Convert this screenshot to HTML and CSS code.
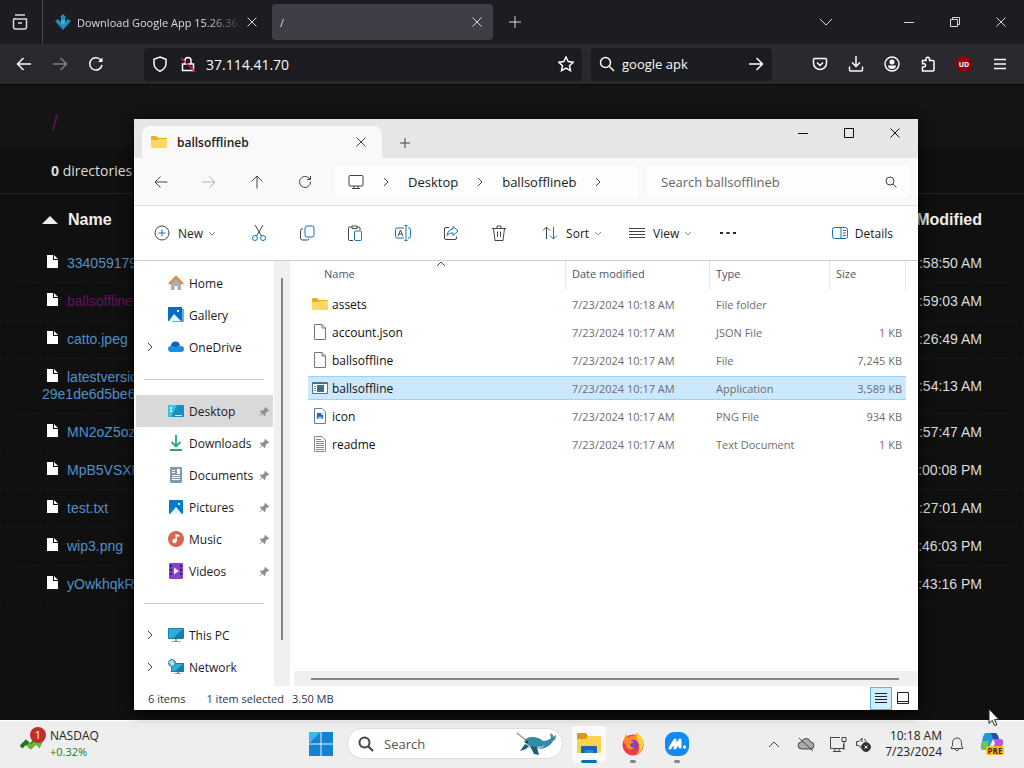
FILE: index.html
```html
<!DOCTYPE html>
<html lang="en">
<head>
  <meta charset="UTF-8">
  <title>Desktop</title>
  <meta name="viewport" content="width=device-width, initial-scale=1">
  <link rel="stylesheet" href="styles.css">
</head>
<body>
  <!-- shared icons -->
  <svg class="sprite" aria-hidden="true">
    <symbol id="doc" viewBox="0 0 11 13"><path fill="#fff" d="M0 0h6v5h5v8H0zM7 0l4 4H7z"/></symbol>
    <symbol id="close" viewBox="0 0 12 12"><path d="M1.500 1.500l9 9M10.500 1.500l-9 9"/></symbol>
    <symbol id="right" viewBox="0 0 12 12"><path d="M4 2l4 4-4 4"/></symbol>
    <symbol id="down" viewBox="0 0 12 12"><path d="M3 5l3 3 3-3"/></symbol>
    <symbol id="glass" viewBox="0 0 16 16"><circle cx="6.500" cy="6.500" r="5"/><path d="M10.200 10.200L15 15"/></symbol>
    <symbol id="arrow" viewBox="0 0 16 16"><path d="M15 8H1.500M7.500 2l-6 6 6 6"/></symbol>
    <symbol id="pin" viewBox="0 0 12 12"><path fill="#8a8f95" stroke="none" d="M7 1l4 4-1 1-1-.2L7.200 7.600 7 10 5.900 11 3.600 8.500.8 11.300l-.5-.5L3 8 .9 6 2 5l2.400-.2L6.200 3 6 2z"/></symbol>
    <symbol id="folder" viewBox="0 0 16 16"><path fill="#e8b021" d="M0 3q0-1 1-1h4l2 2h8q1 0 1 1v3H0z"/><path fill="#ffd766" d="M0 6h6l2-1h8v8q0 1-1 1H1q-1 0-1-1z"/></symbol>
    <symbol id="page" viewBox="0 0 12 16"><path fill="#fdfdfd" stroke="#777" d="M.5.500h7.500L11.500 4v11.500H.5z"/><path fill="none" stroke="#777" d="M8 .5V4h3.500"/></symbol>
  </svg>

  <div class="desktop">
    <div class="browser">
      <div class="tabs">
        <button class="tab-view" aria-label="Firefox View">
          <svg width="18" height="18" viewBox="0 0 18 18"><path d="M4 2h10M2.500 6h13v8q0 2-2 2h-9q-2 0-2-2V7q0-1.500 2-1.500M7 10h4"/></svg>
        </button>
        <div class="tab">
          <svg width="16" height="16" viewBox="0 0 16 16"><path fill="#1d8cb8" stroke="none" d="M8 0l3 3-3 3-3-3zM0 7l3-2 5 5 5-5 3 2-8 9z"/><path fill="#37b4d8" stroke="none" d="M6 4l2 2 2-2v5l-2 2-2-2z"/></svg>
          <span class="tab-title">Download Google App 15.26.36</span>
          <button aria-label="Close tab"><svg width="12" height="12"><use href="#close"/></svg></button>
        </div>
        <div class="tab active">
          <span class="tab-title">/</span>
          <button aria-label="Close tab"><svg width="12" height="12"><use href="#close"/></svg></button>
        </div>
        <button class="new-tab" aria-label="New tab"><svg width="12" height="12" viewBox="0 0 12 12"><path d="M6 0v12M0 6h12"/></svg></button>
        <div class="tab-controls">
          <button aria-label="List all tabs"><svg width="14" height="14" viewBox="0 0 14 14"><path d="M1 4l6 6 6-6"/></svg></button>
          <button aria-label="Minimize"><svg width="12" height="12" viewBox="0 0 12 12"><path d="M1 6.500h10"/></svg></button>
          <button aria-label="Restore"><svg width="12" height="12" viewBox="0 0 12 12"><path d="M1.500 3.500h7v7h-7zM3.500 3V1.500h7v7H9"/></svg></button>
          <button aria-label="Close"><svg width="12" height="12"><use href="#close"/></svg></button>
        </div>
      </div>

      <div class="toolbar">
        <div class="nav-icons">
          <button aria-label="Back"><svg width="16" height="16"><use href="#arrow"/></svg></button>
          <button class="dim" aria-label="Forward"><svg class="flip" width="16" height="16"><use href="#arrow"/></svg></button>
          <button aria-label="Reload"><svg width="16" height="16" viewBox="0 0 16 16"><path d="M14 9a6.200 6.200 0 1 1-2-5.800L14 5"/><path fill="#fbfbfe" d="M14.500 1.500v4.500H10z" stroke="none"/></svg></button>
        </div>
        <div class="urlbar">
          <svg width="16" height="16" viewBox="0 0 16 16"><path d="M8 1l6 2.200v4C14 11 12 13.500 8 15.200 4 13.500 2 11 2 7.200v-4z"/></svg>
          <svg width="16" height="16" viewBox="0 0 16 16"><path d="M2.500 8h11v6.500h-11zM5 8V4.500a3 3 0 0 1 6 0V8"/><path class="slash" d="M1 2l14 13.500"/></svg>
          <input type="text" value="37.114.41.70" aria-label="Address">
          <svg width="16" height="16" viewBox="0 0 16 16"><path d="M8 1l2.200 4.600 5 .6-3.700 3.500 1 5L8 12.200l-4.500 2.500 1-5L.8 6.200l5-.6z"/></svg>
        </div>
        <div class="searchbar">
          <svg width="16" height="16"><use href="#glass"/></svg>
          <input type="text" value="google apk" aria-label="Search">
          <svg class="flip" width="16" height="16"><use href="#arrow"/></svg>
        </div>
        <div class="tools">
          <button aria-label="Pocket"><svg width="16" height="16" viewBox="0 0 16 16"><path d="M2.500 2.500h11q1 0 1 1V7a6.500 6.500 0 0 1-13 0V3.500q0-1 1-1zM5 6.500L8 9.500l3-3"/></svg></button>
          <button aria-label="Downloads"><svg width="16" height="16" viewBox="0 0 16 16"><path d="M8 0v10M4 6.500L8 10.500l4-4M1.500 10.500V14q0 1 1 1h11q1 0 1-1v-3.500"/></svg></button>
          <button aria-label="Account"><svg width="16" height="16" viewBox="0 0 16 16"><circle cx="8" cy="8" r="7"/><circle cx="8" cy="6" r="2.500" fill="#fbfbfe" stroke="none"/><path fill="#fbfbfe" stroke="none" d="M3.800 9.500h8.400Q11.500 13 8 13T3.800 9.500z"/></svg></button>
          <button aria-label="Extensions"><svg width="16" height="16" viewBox="0 0 16 16"><path d="M6 4.500V3a1.700 1.700 0 0 1 3.500 0v1.500H13q1 0 1 1V14q0 1-1 1H2.500v-4H4a1.600 1.600 0 0 0 0-3.300H2.500V4.500z"/></svg></button>
          <button class="ublock" aria-label="uBlock">UD</button>
          <button aria-label="Menu"><svg width="14" height="14" viewBox="0 0 14 14"><path d="M1 2.500h12M1 7h12M1 11.500h12"/></svg></button>
        </div>
      </div>

      <main class="listing">
        <header><h1><a href="#">/</a></h1></header>
        <div class="meta"><b>0</b> directories</div>
        <table>
          <thead>
            <tr><th><span class="sort-up"></span>Name</th><th>Modified</th></tr>
          </thead>
          <tbody>
            <tr><td><svg class="doc"><use href="#doc"/></svg><a href="#">334059179</a></td><td>:58:50 AM</td></tr>
            <tr><td><svg class="doc"><use href="#doc"/></svg><a class="visited" href="#">ballsoffline</a></td><td>:59:03 AM</td></tr>
            <tr><td><svg class="doc"><use href="#doc"/></svg><a href="#">catto.jpeg</a></td><td>:26:49 AM</td></tr>
            <tr><td><svg class="doc"><use href="#doc"/></svg><a href="#">latestversio<br>29e1de6d5be6</a></td><td>:54:13 AM</td></tr>
            <tr><td><svg class="doc"><use href="#doc"/></svg><a href="#">MN2oZ5oz</a></td><td>:57:47 AM</td></tr>
            <tr><td><svg class="doc"><use href="#doc"/></svg><a href="#">MpB5VSXH</a></td><td>:00:08 PM</td></tr>
            <tr><td><svg class="doc"><use href="#doc"/></svg><a href="#">test.txt</a></td><td>:27:01 AM</td></tr>
            <tr><td><svg class="doc"><use href="#doc"/></svg><a href="#">wip3.png</a></td><td>:46:03 PM</td></tr>
            <tr><td><svg class="doc"><use href="#doc"/></svg><a href="#">yOwkhqkR</a></td><td>:43:16 PM</td></tr>
          </tbody>
        </table>
      </main>
    </div>

    <!-- File Explorer window -->
    <section class="explorer">
      <div class="titlebar">
        <div class="ex-tab">
          <svg width="16" height="16"><use href="#folder"/></svg>
          <b>ballsofflineb</b>
          <button aria-label="Close tab"><svg width="12" height="12"><use href="#close"/></svg></button>
        </div>
        <button class="ex-new" aria-label="New tab"><svg width="10" height="10" viewBox="0 0 10 10"><path d="M5 0v10M0 5h10"/></svg></button>
        <div class="win-controls">
          <button aria-label="Minimize"><svg width="12" height="12" viewBox="0 0 12 12"><path d="M1 6.500h10"/></svg></button>
          <button aria-label="Maximize"><svg width="12" height="12" viewBox="0 0 12 12"><path d="M1.500 1.500h9v9h-9z"/></svg></button>
          <button aria-label="Close"><svg width="12" height="12"><use href="#close"/></svg></button>
        </div>
      </div>

      <div class="navbar">
        <div class="ex-nav">
          <button aria-label="Back"><svg width="14" height="14" viewBox="0 0 14 14"><path d="M13.500 7H1M6.500 1.500L1 7l5.500 5.500"/></svg></button>
          <button class="dim" aria-label="Forward"><svg width="14" height="14" viewBox="0 0 14 14"><path d="M.5 7H13M7.500 1.500L13 7l-5.500 5.500"/></svg></button>
          <button aria-label="Up"><svg width="14" height="14" viewBox="0 0 14 14"><path d="M7 13.500V1M1.500 6.500L7 1l5.500 5.500"/></svg></button>
          <button aria-label="Refresh"><svg width="14" height="14" viewBox="0 0 14 14"><path d="M12.500 7A5.500 5.500 0 1 1 11 3.200l1.500 1.300M12.500 1v3.500H9"/></svg></button>
        </div>
        <div class="crumbs">
          <svg width="16" height="16" viewBox="0 0 16 16"><rect x="1" y="1.500" width="14" height="10.500" rx="1"/><path d="M6 12v2.500M10 12v2.500M4 14.500h8"/></svg>
          <svg width="12" height="12"><use href="#right"/></svg>
          <a href="#">Desktop</a>
          <svg width="12" height="12"><use href="#right"/></svg>
          <a href="#">ballsofflineb</a>
          <svg width="12" height="12"><use href="#right"/></svg>
        </div>
        <div class="ex-search">
          <input type="text" placeholder="Search ballsofflineb" aria-label="Search ballsofflineb">
          <svg width="12" height="12" viewBox="0 0 12 12"><circle cx="5" cy="5" r="4"/><path d="M8 8l3.500 3.500"/></svg>
        </div>
      </div>

      <div class="commands">
        <button class="cmd new"><svg width="16" height="16" viewBox="0 0 16 16"><circle cx="8" cy="8" r="7"/><path class="blue" d="M8 4.500v7M4.500 8h7"/></svg>New<svg class="caret" width="12" height="12"><use href="#down"/></svg></button>
        <div class="cmd-icons">
          <button aria-label="Cut"><svg width="16" height="16" viewBox="0 0 16 16"><path d="M4 0l6.500 11M12 0L5.500 11"/><circle class="blue" cx="4" cy="13" r="2.500"/><circle class="blue" cx="12" cy="13" r="2.500"/></svg></button>
          <button aria-label="Copy"><svg width="16" height="16" viewBox="0 0 16 16"><rect class="blue" x="6" y="1" width="9" height="11" rx="2"/><path d="M4 4H3q-1.500 0-1.500 1.500v7.500q0 2 2 2h5q1.500 0 1.500-1.500"/></svg></button>
          <button aria-label="Paste"><svg width="16" height="16" viewBox="0 0 16 16"><path d="M6 15.500H2.500q-1 0-1-1V3q0-1 1-1H5M10 2h2q1 0 1 1v2M5 1h5v2.500H5z"/><rect class="blue" x="7.500" y="6" width="7" height="9.500" rx="1"/></svg></button>
          <button aria-label="Rename"><svg width="18" height="16" viewBox="0 0 18 16"><path class="blue" d="M10 3H3Q1.500 3 1.500 4.500v7Q1.500 13 3 13h7M14 3h1q1.500 0 1.500 1.500v7Q16.500 13 15 13h-1M12 1v14M10.500.5h3M10.500 15.500h3"/><path d="M4 11l2.500-6L9 11M5 9h3"/></svg></button>
          <button aria-label="Share"><svg width="16" height="16" viewBox="0 0 16 16"><path d="M6 2.500H3Q1.500 2.500 1.500 4v9q0 1.500 1.500 1.500h9q1.500 0 1.500-1.500v-1.500"/><path class="blue" d="M10 1.500l5 4.500-5 4.500V8q-4-.5-6 2.500Q5 4.500 10 4z"/></svg></button>
          <button aria-label="Delete"><svg width="16" height="16" viewBox="0 0 16 16"><path d="M1 3.500h14M6 3V1h4v2M2.500 3.500l1.500 12h8l1.500-12M6.500 6.500v5.500M9.500 6.500v5.500"/></svg></button>
        </div>
        <button class="cmd sort"><svg width="16" height="16" viewBox="0 0 16 16"><path d="M4.500 14V2M1 5.500L4.500 2 8 5.500"/><path class="blue" d="M11.500 2v12M8 10.500l3.500 3.500 3.500-3.500"/></svg>Sort<svg class="caret" width="12" height="12"><use href="#down"/></svg></button>
        <button class="cmd view"><svg width="16" height="16" viewBox="0 0 16 16"><path d="M0 3.500h16M0 6.500h16M0 9.500h16M0 12.500h16"/></svg>View<svg class="caret" width="12" height="12"><use href="#down"/></svg></button>
        <button class="cmd more" aria-label="See more"><svg width="16" height="4" viewBox="0 0 16 4"><path fill="#222" stroke="none" d="M0 1h3v2H0zM6.500 1h3v2h-3zM13 1h3v2h-3z"/></svg></button>
        <button class="cmd details"><svg width="16" height="16" viewBox="0 0 16 16"><rect class="blue" x=".5" y="2.500" width="15" height="11" rx="2"/><path class="blue" d="M9 2.500v11M11 5.500h3M11 8h3M11 10.500h3"/></svg>Details</button>
      </div>

      <div class="panes">
        <nav class="side">
          <a href="#"><svg class="ico" viewBox="0 0 16 16"><path fill="#a9adb5" d="M3 7l5-4 5 4v8H9.500v-4h-3v4H3z"/><path fill="none" stroke="#e08a3c" stroke-width="2.400" d="M1 9l7-7 7 7"/></svg>Home</a>
          <a href="#"><svg class="ico" viewBox="0 0 16 16"><path fill="#55b5ec" d="M3 2h13v13H4z"/><path fill="#0c6cc0" d="M0 0h14v14H0z"/><path fill="#e6f6ff" d="M1 14l5-7 7 7zM9 3h2v2H9z"/></svg>Gallery</a>
          <a href="#" class="expand"><svg class="chev" width="12" height="12"><use href="#right"/></svg><svg class="ico" viewBox="0 0 16 16"><path fill="#0f63bd" d="M3 8a4.500 4.500 0 0 1 9-2l-6 7z"/><path fill="#1d8ee5" d="M2 13q-2-1-2-3 0-3 3-3 2-.500 4 1l6-1q3 0 3 3t-3 3z"/></svg>OneDrive</a>
          <hr>
          <a href="#" class="current"><svg class="ico" viewBox="0 0 16 16"><rect y="2" width="16" height="12" rx="1" fill="#198dc4"/><path fill="#42c1df" d="M0 2h9L3 14H0z"/><path fill="#c9f2ff" d="M2 4h2v2H2zM2 7h2v2H2zM7 12h7v1H7z"/></svg>Desktop<svg class="pin"><use href="#pin"/></svg></a>
          <a href="#"><svg class="ico" viewBox="0 0 16 16"><path fill="none" stroke="#24a77e" stroke-width="1.800" d="M8 0v11M3.500 7L8 11.500 12.500 7M2 15h12"/></svg>Downloads<svg class="pin"><use href="#pin"/></svg></a>
          <a href="#"><svg class="ico" viewBox="0 0 16 16"><rect x="2" width="12" height="16" rx="1" fill="#8499ad"/><path fill="#fff" d="M4 3h3v1H4zM4 5h3v1H4zM9 2h3v5H9zM4 8h8v1H4zM4 10h8v1H4zM4 12h8v1H4z"/></svg>Documents<svg class="pin"><use href="#pin"/></svg></a>
          <a href="#"><svg class="ico" viewBox="0 0 16 16"><rect x="1" y="1" width="14" height="14" rx="1" fill="#0878cc"/><path fill="#e6f6ff" d="M2 15l6-7 6 7zM10 4h2v2h-2z"/></svg>Pictures<svg class="pin"><use href="#pin"/></svg></a>
          <a href="#"><svg class="ico" viewBox="0 0 16 16"><circle cx="8" cy="8" r="8" fill="#d96450"/><circle cx="6.500" cy="10" r="2.200" fill="#fff"/><path fill="#fff" d="M7.500 3l4 1v2l-2.700-.7V10H7.500z"/></svg>Music<svg class="pin"><use href="#pin"/></svg></a>
          <a href="#"><svg class="ico" viewBox="0 0 16 16"><rect x="1" width="14" height="16" rx="1" fill="#8342c8"/><path fill="#3f1584" d="M2 2h2v2H2zM2 6h2v2H2zM2 10h2v2H2zM12 2h2v2h-2zM12 6h2v2h-2zM12 10h2v2h-2z"/><path fill="#f4e8ff" d="M6 4.500l5 3.500-5 3.500z"/></svg>Videos<svg class="pin"><use href="#pin"/></svg></a>
          <hr>
          <a href="#" class="expand"><svg class="chev" width="12" height="12"><use href="#right"/></svg><svg class="ico" viewBox="0 0 16 16"><rect y="1" width="16" height="11" rx="1" fill="#167fae"/><path fill="#2cb0d8" d="M1 2h14L5 11H1z"/><path fill="#8a9aa5" d="M7 12h2v2h3v1H4v-1h3z"/></svg>This PC</a>
          <a href="#" class="expand"><svg class="chev" width="12" height="12"><use href="#right"/></svg><svg class="ico" viewBox="0 0 16 16"><rect x="3" y="4" width="13" height="9" fill="#167fae"/><path fill="#2cb0d8" d="M4 5h11l-8 7H4z"/><path fill="#8a9aa5" d="M9 13h2v1h2v1H7v-1h2z"/><circle cx="4" cy="4" r="3.500" fill="#6abbd6" stroke="#4a7890"/><path fill="none" stroke="#e4fbff" d="M1 3l5 2M4 1v6"/></svg>Network</a>
        </nav>
        <div class="side-scroll"><i></i></div>

        <div class="files">
          <svg class="sort-mark" width="10" height="6" viewBox="0 0 10 6"><path d="M1 5l4-4 4 4"/></svg>
          <table>
            <thead>
              <tr><th>Name</th><th>Date modified</th><th>Type</th><th>Size</th></tr>
            </thead>
            <tbody>
              <tr><td><svg class="ico"><use href="#folder"/></svg>assets</td><td>7/23/2024 10:18 AM</td><td>File folder</td><td></td></tr>
              <tr><td><svg class="ico"><use href="#page"/></svg>account.json</td><td>7/23/2024 10:17 AM</td><td>JSON File</td><td>1 KB</td></tr>
              <tr><td><svg class="ico"><use href="#page"/></svg>ballsoffline</td><td>7/23/2024 10:17 AM</td><td>File</td><td>7,245 KB</td></tr>
              <tr class="selected"><td><svg class="ico" viewBox="0 0 16 16"><path fill="#fff" stroke="#527488" d="M.5 2.500h15v11H.5z"/><path fill="#356f91" d="M1 3h14v1H1zM5 5h7v7H5z"/><path fill="#6a8aa0" d="M2 6h2v1H2zM2 8h2v1H2zM2 10h2v1H2z"/></svg>ballsoffline</td><td>7/23/2024 10:17 AM</td><td>Application</td><td>3,589 KB</td></tr>
              <tr><td><svg class="ico" viewBox="0 0 16 16"><path fill="#fff" stroke="#6d7c9c" d="M2.500.500h7.500L13.500 4v11.500h-11z"/><rect x="5" y="5" width="6" height="6" fill="#2b5fc4"/><path fill="#a7d3f7" d="M5 11l3-3 3 3zM9 5h2v2H9z"/></svg>icon</td><td>7/23/2024 10:17 AM</td><td>PNG File</td><td>934 KB</td></tr>
              <tr><td><svg class="ico" viewBox="0 0 16 16"><path fill="#fff" stroke="#888" d="M2.500.500h7.500L13.500 4v11.500h-11zM4 3.500h5M4 5.500h8M4 7.500h8M4 9.500h8M4 11.500h8M4 13.500h8"/></svg>readme</td><td>7/23/2024 10:17 AM</td><td>Text Document</td><td>1 KB</td></tr>
            </tbody>
          </table>
          <div class="h-scroll"><i></i></div>
        </div>
      </div>

      <footer class="status">
        <span>6 items</span><span>1 item selected</span><span>3.50 MB</span>
        <div class="modes">
          <button class="on" aria-label="Details view"><svg width="12" height="12" viewBox="0 0 12 12"><path d="M0 1.500h12M0 4.500h12M0 7.500h12M0 10.500h12"/></svg></button>
          <button aria-label="Large icons"><svg width="12" height="12" viewBox="0 0 12 12"><path d="M.5.500h11v11H.5zM0 9.500h12"/></svg></button>
        </div>
      </footer>
    </section>

    <div class="taskbar">
      <div class="widgets">
        <svg width="26" height="26" viewBox="0 0 26 26"><path fill="none" stroke="#267326" stroke-width="4" d="M1 20l5-5 4 4 4-4"/><path fill="none" stroke="#66b832" stroke-width="4" d="M8 17l3 3 5-5 3 3 3-6"/><circle cx="18" cy="8" r="8" fill="#c42b2b"/><text x="18" y="12" text-anchor="middle">1</text></svg>
        <div>NASDAQ<br><span class="up">+0.32%</span></div>
      </div>
      <div class="apps">
        <button aria-label="Start"><svg width="24" height="24" viewBox="0 0 24 24"><path fill="#1583d2" d="M0 0h11.500v11.500H0zM12.500 0H24v11.500H12.500zM0 12.500h11.500V24H0zM12.500 12.500H24V24H12.500z"/><path fill="#41b4ee" d="M0 0h11.500L0 11.500z"/></svg></button>
        <div class="task-search">
          <svg class="line" width="16" height="16"><use href="#glass"/></svg>
          <input type="text" placeholder="Search" aria-label="Search">
          <svg width="40" height="24" viewBox="0 0 40 24"><path fill="none" stroke="#b98a86" stroke-width="1.500" d="M1 1l10 8"/><path fill="#358ba4" d="M8 10q2-5 8-5 7 0 11 4 5 0 8-3l-1-5q3 1 4 4 1-2 2-2 0 5-3 6-3 6-12 8-9 0-17-7z"/><path fill="#a9d6e2" d="M9 13q8 3 12 2 4 0 8-2-4 5-11 4-6-1-9-4z"/><path fill="#255d77" d="M14 14l4 8 5 1-2-8zM9 12l-5 7 6-2 3-3z"/><circle cx="11" cy="10" r="1" fill="#123"/></svg>
        </div>
        <button class="app open" aria-label="File Explorer"><svg width="26" height="26" viewBox="0 0 26 26"><path fill="#d99916" d="M1 3q0-1 1-1h8l2 3h12v6H1z"/><path fill="#ffd14d" d="M1 8h9l2-3h12q1 0 1 1v15q0 1-1 1H2q-1 0-1-1z"/><path fill="#1469b4" d="M5 22v-6q0-1 1-1h14q1 0 1 1v6h-4v-3H9v3z"/><path fill="#288ed4" d="M9 19h8v3H9z"/></svg></button>
        <button class="app" aria-label="Firefox"><svg width="24" height="24" viewBox="0 0 24 24"><circle cx="12" cy="13" r="10.500" fill="#ef3b52"/><path fill="#ff8c20" d="M3 7l2-5 2 4q3-3 6-2l3-3q7 5 6.500 12Q22 21 14 23q6-4 4-11-2-5-7-4L3 12z"/><path fill="#ffd43b" d="M16 1q7 5 6 12-1 6-5 8 3-6 0-11-2-3-1-9z"/><circle cx="12" cy="13" r="5" fill="#8340ca"/><path fill="#ff8b23" d="M5 9q4-2 8 1l-4 2q0 4 5 4-6 4-9-2z"/></svg></button>
        <button class="app" aria-label="Monect"><svg width="26" height="26" viewBox="0 0 26 26"><rect x="1" y="1" width="24" height="24" rx="9" fill="#1389f3"/><path fill="none" stroke="#fff" stroke-width="3" stroke-linecap="round" stroke-linejoin="round" d="M6 17l5-8v8l5-8v7"/><circle cx="20.500" cy="16" r="1.700" fill="#fff"/></svg></button>
      </div>
      <div class="tray">
        <button aria-label="Hidden icons"><svg class="line" width="12" height="12" viewBox="0 0 12 12"><path d="M1 9l5-5 5 5"/></svg></button>
        <button aria-label="OneDrive"><svg class="line" width="18" height="16" viewBox="0 0 18 16"><path fill="#aaa" d="M5 13q-4 0-4-3.500T4.500 6Q6 2 9.500 2.500t4 3.500q3.500 0 3.500 3.500T13.500 13z"/><path d="M2 2l14 13"/></svg></button>
        <button aria-label="Network"><svg class="line" width="18" height="18" viewBox="0 0 18 18"><path d="M11 2.500H1.500v11h13V9M6 14v2M10 14v2M4 16.500h8M13 2.500h4v4h-4zM15 7v8"/></svg></button>
        <button aria-label="Volume"><svg class="line" width="16" height="16" viewBox="0 0 16 16"><path d="M6 12L4 9.500H1.500v-4H4L7 2v4M9 3q2 1 2 3"/><circle cx="11" cy="11" r="4.500" fill="#333"/><path stroke="#fff" d="M9.500 9.500l3 3M12.500 9.500l-3 3"/></svg></button>
        <div class="clock">10:18 AM<br>7/23/2024</div>
        <button aria-label="Notifications"><svg class="line" width="16" height="16" viewBox="0 0 16 16"><path d="M2 12.500l1.500-3v-3a4.500 4.500 0 0 1 9 0v3l1.500 3zM6 13q2 3.500 4 0"/></svg></button>
        <button aria-label="Copilot"><svg width="26" height="26" viewBox="0 0 26 26"><path fill="#2098d4" d="M7 2h9q2 0 3 3l1 3h-6L9 19H5q-4 0-3-4l2-9q1-4 3-4z"/><path fill="#6ac55d" d="M3 10h7l-2 9H5q-4 0-3-4z"/><path fill="#244bad" d="M12 2h4q2 0 3 3l1 3h-6z"/><path fill="#bf55d8" d="M14 8h7q4 0 3 4l-2 8h-9l3-8z"/><path fill="#f5657f" d="M9 15h5l-2 7H7z"/><rect x="7" y="15" width="18" height="9" rx="2" fill="#fbbd27"/><text class="pre" x="16" y="23" text-anchor="middle">PRE</text></svg></button>
      </div>
    </div>

    <svg class="cursor" width="12" height="19" viewBox="0 0 12 19"><path fill="#fff" stroke="#222" d="M1 1v14.500l3.300-3.100 2.300 5.200 2.300-1-2.300-5H11z"/></svg>
  </div>
</body>
</html>
```
FILE: styles.css
```css
* { box-sizing: border-box; }
body { margin: 0; font-family: "Open Sans", "Noto Sans", sans-serif; font-size: 12px; }
button { display: flex; align-items: center; justify-content: center; padding: 0; border: 0; background: none; color: inherit; font: inherit; }
input { min-width: 0; border: 0; padding: 0; background: none; color: inherit; font: inherit; outline: 0; }
a { color: inherit; text-decoration: none; }
svg { flex: none; }
.sprite { display: none; }
.flip { transform: rotate(180deg); }
.desktop { position: relative; display: flex; flex-direction: column; height: 100vh; overflow: hidden; background: #0d0d0d; }

/* browser */
.browser { flex: 1; min-height: 0; overflow: hidden; color: #fbfbfe; background: #101010; }
.browser svg { fill: none; stroke: #d8d8dc; }
.tabs { display: flex; align-items: center; height: 44px; background: #1d1c21; }
.tab-view { width: 43px; height: 44px; padding-right: 2px; border-right: 1px solid #47464f; }
.tab-view svg { stroke-width: 1.5; }
.tab { display: flex; align-items: center; width: 221px; height: 36px; padding: 0 6px 0 12px; border-radius: 4px; font-size: 11px; }
.tab svg { margin-right: 6px; }
.tab button svg { margin: 0; }
.tab-title { flex: 1; overflow: hidden; white-space: nowrap; color: #dcdce0; mask-image: linear-gradient(to right, #000 76%, transparent 98%); }
.tab.active { margin-left: 8px; padding: 0 10px 0 8px; background: #3f3e46; }
.new-tab { width: 44px; height: 36px; }
.tab-controls { display: flex; margin-left: auto; }
.tab-controls button { width: 46px; height: 36px; }
.tab-controls button:first-child { margin-right: 37px; }
.toolbar { display: flex; align-items: center; height: 41px; background: #2a292e; border-bottom: 1px solid #08080a; }
.toolbar svg { stroke: #fbfbfe; stroke-width: 1.5; }
.toolbar .slash { stroke: #d9164f; }
.nav-icons { display: flex; width: 144px; padding-left: 6px; }
.nav-icons button, .tools button { width: 36px; height: 32px; }
.dim { opacity: .4; }
.urlbar, .searchbar { display: flex; align-items: center; height: 33px; padding: 0 8px; border-radius: 4px; background: #1c1b20; font-size: 14px; }
.urlbar { flex: 1; gap: 12px; }
.urlbar input { flex: 1; margin-left: -2px; }
.searchbar { width: 181px; margin-left: 9px; gap: 7px; font-size: 13px; }
.searchbar input { flex: 1; }
.tools { display: flex; margin-left: 30px; padding-right: 6px; }
.tools .ublock { width: 16px; height: 16px; margin: 8px 10px; border-radius: 8px; background: #93000c; color: #fff; font-size: 7px; font-weight: 700; }

/* directory listing */
.listing header { height: 63px; padding: 22px 52px 0; background: #141414; }
.listing h1 { margin: 0; font: 20px/32px "Liberation Sans", Arial, sans-serif; color: #66105f; }
.listing .meta { height: 46px; padding: 0 51px; border-bottom: 1px solid #222; font-size: 14px; line-height: 46px; color: #ddd; }
.listing table { width: 100%; border-collapse: separate; border-spacing: 0; font: 14px/17px "Liberation Sans", Arial, sans-serif; }
.listing th { height: 51px; padding: 0 42px; font-size: 16px; text-align: left; color: #eee; }
.listing td { padding: 10px 42px; border-bottom: 1px dashed #181818; color: #ddd; }
.listing th:last-child, .listing td:last-child { text-align: right; }
.listing td a { color: #5290c8; }
.listing td a.visited { color: #66105f; }
.listing .doc { width: 11px; height: 13px; margin: 0 9px 0 5px; stroke: none; vertical-align: 0; }
.sort-up { display: inline-block; margin: 0 10px 1px 0; border: 8px solid transparent; border-top: 0; border-bottom: 8px solid #eee; }

/* explorer window */
.explorer { position: absolute; left: 134px; top: 119px; display: flex; flex-direction: column; width: 784px; height: 591px; background: #fff; color: #1b1b1b; box-shadow: 0 2px 12px #000; }
.explorer button svg, .navbar svg, .chev, .sort-mark, .line { fill: none; stroke: #444; }
.explorer .ico { width: 16px; height: 16px; }
.titlebar { display: flex; height: 39px; background: #e6e6e6; }
.ex-tab { display: flex; align-items: center; gap: 10px; width: 240px; margin: 7px 0 0 8px; padding: 0 15px 0 9px; border-radius: 8px 8px 0 0; background: #f9f9f9; }
.ex-tab b { flex: 1; font-weight: 600; }
.ex-new { width: 45px; padding-top: 9px; }
.win-controls { display: flex; height: 28px; margin-left: auto; }
.win-controls button { width: 46px; }
.explorer .win-controls svg { stroke: #111; }
.navbar { display: flex; align-items: center; height: 48px; padding-right: 9px; background: #f9f9f9; border-bottom: 1px solid #ddd; font-size: 13px; }
.ex-nav { display: flex; width: 201px; padding-left: 3px; }
.ex-nav button { width: 48px; height: 32px; }
.crumbs, .ex-search { display: flex; align-items: center; height: 32px; border-radius: 4px; background: #fdfdfd; }
.crumbs { flex: 1; gap: 16px; padding-left: 13px; }
.ex-search { width: 262px; margin-left: 9px; padding: 0 12px 0 14px; }
.ex-search input { flex: 1; }
.ex-search input::placeholder { color: #666; opacity: 1; }
.commands { display: flex; align-items: center; height: 55px; border-bottom: 1px solid #ccc; }
.cmd { gap: 8px; height: 32px; }
.cmd .caret { margin-left: -5px; opacity: .6; }
.cmd.new { margin-left: 20px; }
.explorer .blue { stroke: #1373b9; }
.cmd-icons { display: flex; width: 288px; margin-left: 17px; }
.cmd-icons button { width: 48px; height: 32px; }
.cmd.sort { margin-left: 19px; }
.cmd.view { margin-left: 25px; }
.cmd.more { margin-left: 26px; }
.cmd.details { gap: 7px; margin: 0 25px 0 auto; }

.panes { display: flex; flex: 1; min-height: 0; }
.side { width: 140px; padding: 6px 1px 0 2px; }
.side a { display: flex; align-items: center; gap: 5px; height: 32px; padding-left: 32px; }
.side a.expand { padding-left: 8px; }
.side .chev { margin-right: 7px; }
.side .current { background: #d9d9d9; }
.side .pin { width: 11px; height: 11px; margin: 0 3px 0 auto; }
.side hr { height: 1px; margin: 16px 9px 15px 8px; border: 0; background: #c8c8c8; }
.side-scroll { width: 16px; padding: 17px 7px 0; background: #f0f0f0; }
.side-scroll i { display: block; height: 362px; background: #858585; }
.files { position: relative; display: flex; flex: 1; flex-direction: column; }
.sort-mark { position: absolute; left: 146px; top: 0; }
.files table { margin: 0 12px 0 18px; table-layout: fixed; border-collapse: separate; border-spacing: 0; }
.files th { width: 144px; height: 29px; padding: 0 6px 4px; border-right: 1px solid #e5e5e5; font-size: 11px; font-weight: 400; text-align: left; color: #46566b; }
.files th:first-child { width: 258px; padding-left: 16px; }
.files th:nth-child(3) { width: 120px; }
.files th:last-child { width: 76px; }
.files td { height: 28px; padding: 0 4px 0 6px; border: solid transparent; border-width: 2px 0; background-clip: padding-box; font-size: 11px; color: #6d6d6d; white-space: nowrap; }
.files td:first-child { padding-left: 4px; font-size: 12px; color: #111; }
.files td:last-child { text-align: right; }
.files td .ico { margin-right: 4px; vertical-align: -3px; }
.files .selected td { background-color: #cce8ff; box-shadow: inset 0 1px #99d1ff, inset 0 -1px #99d1ff; }
.h-scroll { height: 15px; margin: auto 0 0 4px; padding: 7px 19px 6px 17px; background: #f0f0f0; }
.h-scroll i { display: block; height: 2px; background: #858585; }
.status { display: flex; align-items: center; height: 24px; padding-left: 14px; font-size: 11px; color: #27364a; }
.status span:nth-child(2) { margin: 0 8px 0 21px; }
.modes { display: flex; margin: 0 4px 0 auto; }
.modes button { width: 22px; height: 23px; }
.explorer .modes svg { stroke: #222; }
.modes .on { background: #cdeffc; border: 1px solid #5bb5dd; }

/* taskbar */
.taskbar { display: flex; align-items: center; height: 48px; padding: 0 19px 2px 0; border-top: 1px solid #fff; background: #eee; color: #222; }
.widgets { display: flex; flex: 0 0 309px; align-items: center; gap: 4px; padding-left: 20px; line-height: 16px; }
.widgets svg { margin-bottom: 8px; }
.widgets text { fill: #fff; font-size: 11px; }
.up { font-size: 11px; color: #187a2e; }
.apps { display: flex; align-items: center; }
.task-search { display: flex; align-items: center; gap: 10px; width: 216px; height: 31px; margin: 0 9px 0 14px; padding: 0 6px 0 10px; border: 1px solid #ddd; border-radius: 16px; background: #fff; font-size: 13px; }
.task-search svg:first-child { stroke-width: 2; }
.task-search input { flex: 1; }
.task-search input::placeholder { color: #555; opacity: 1; }
.app { position: relative; width: 34px; height: 36px; margin-right: 10px; border-radius: 4px; }
.app.open { background: #fafafa; }
.app::after { content: ""; position: absolute; bottom: -1px; left: 14px; width: 6px; height: 3px; border-radius: 2px; background: #858585; }
.app.open::after { left: 9px; width: 16px; background: #0070b8; }
.tray { display: flex; flex: 1; align-items: center; justify-content: flex-end; gap: 14px; }
.tray button:first-child { margin-right: 3px; }
.tray button:nth-child(4) { margin-left: -6px; }
.clock { margin-right: -7px; line-height: 16px; text-align: right; }
.pre { fill: #3c2900; font-size: 8px; font-weight: 700; }
.cursor { position: absolute; left: 988px; top: 708px; }
```
